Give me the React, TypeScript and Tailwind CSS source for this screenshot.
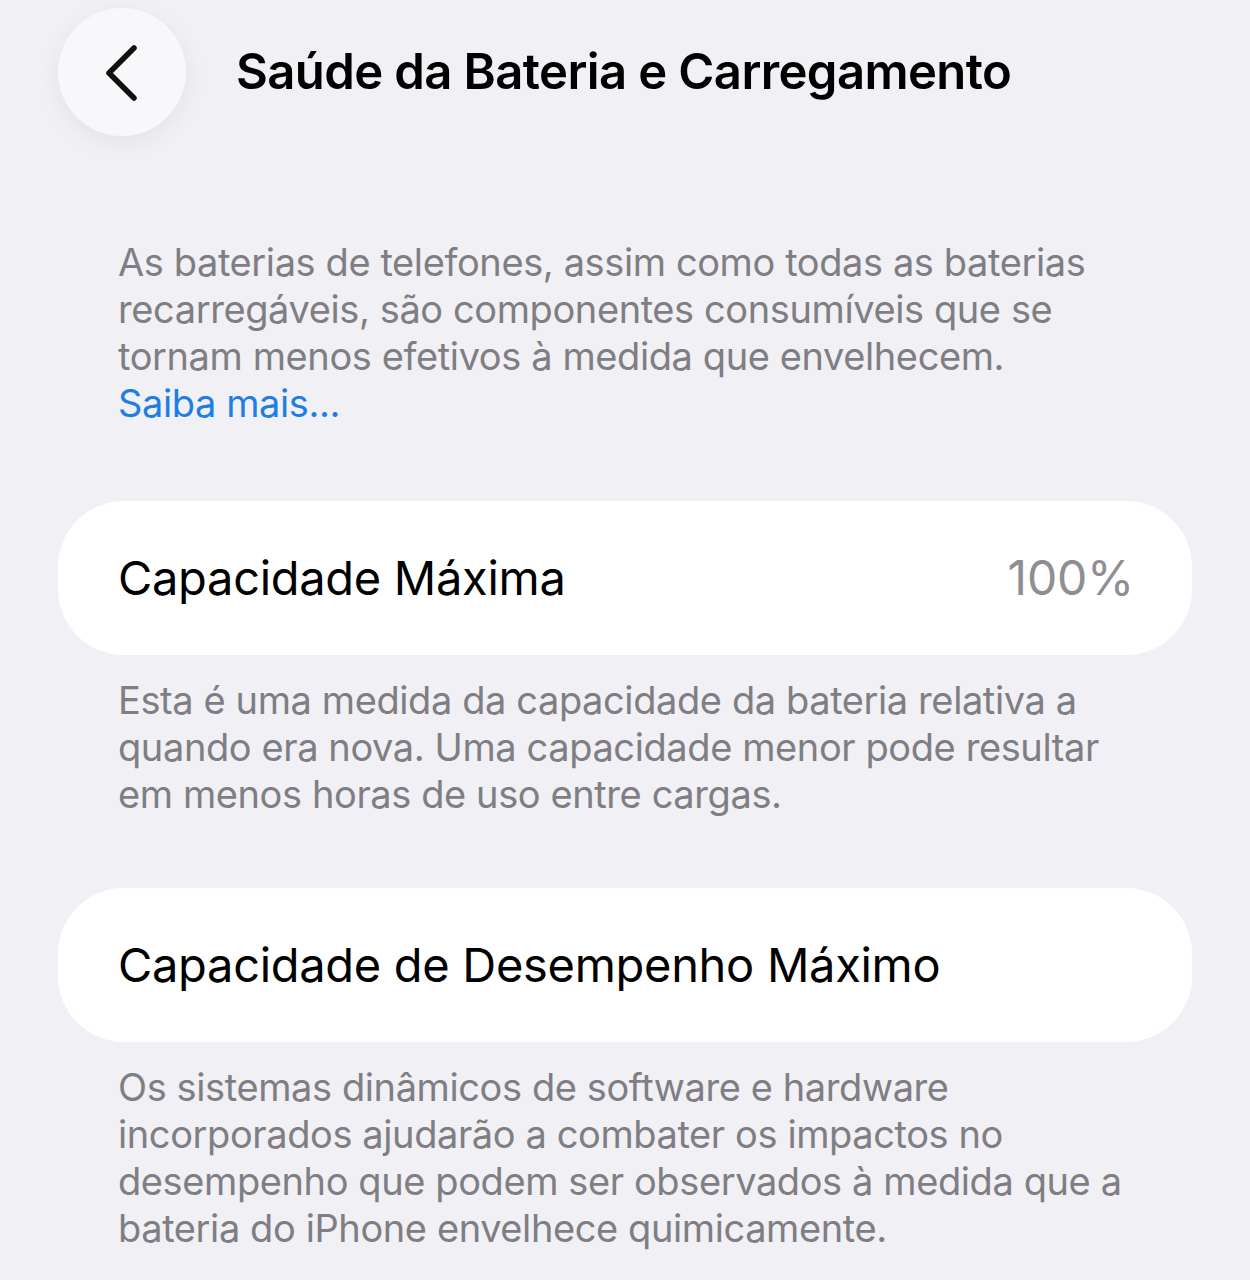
import React from "react";

const font = { fontFamily: "Inter, 'Noto Sans', sans-serif" };

function Note({ lines, link }: { lines: string[]; link?: string }) {
  return (
    <p className="whitespace-nowrap px-[118px] text-[38px] leading-[47px] text-[#7e7e83] tracking-[-0.4px]">
      {lines.map((l, i) => (
        <span key={i} className="block">
          {l}
        </span>
      ))}
      {link && <span className="block text-[#1f7ee4]">{link}</span>}
    </p>
  );
}

function Row({ label, value }: { label: string; value?: string }) {
  return (
    <div className="mx-[58px] flex h-[154px] items-center justify-between rounded-[66px] bg-white pl-[60px] pr-[58px]">
      <span className="text-[47px] text-black tracking-[-0.3px]">{label}</span>
      {value && (
        <span className="text-[48px] text-[#8e8e93] tracking-[-0.2px]">{value}</span>
      )}
    </div>
  );
}

export default function App() {
  return (
    <div
      style={font}
      className="min-h-[1280px] w-[1250px] overflow-hidden bg-[#f1f0f5] pt-2"
    >
      {/* header */}
      <div className="flex items-center pl-[58px]">
        <button className="flex h-[128px] w-[128px] shrink-0 items-center justify-center rounded-full bg-[#f8f8fa] shadow-[0_6px_24px_rgba(0,0,0,0.06)]">
          <svg width="40" height="60" viewBox="0 0 40 60" fill="none">
            <path
              d="M32 6 L7 31 L32 56"
              stroke="#111"
              strokeWidth="5.5"
              strokeLinecap="round"
              strokeLinejoin="round"
            />
          </svg>
        </button>
        <h1 className="ml-[50px] whitespace-nowrap text-[49px] font-semibold text-black tracking-[-0.6px]">
          Saúde da Bateria e Carregamento
        </h1>
      </div>

      <div className="mt-[103px]">
        <Note
          lines={[
            "As baterias de telefones, assim como todas as baterias",
            "recarregáveis, são componentes consumíveis que se",
            "tornam menos efetivos à medida que envelhecem.",
          ]}
          link="Saiba mais..."
        />
      </div>

      <div className="mt-[74px]">
        <Row label="Capacidade Máxima" value="100%" />
      </div>

      <div className="mt-[22px]">
        <Note
          lines={[
            "Esta é uma medida da capacidade da bateria relativa a",
            "quando era nova. Uma capacidade menor pode resultar",
            "em menos horas de uso entre cargas.",
          ]}
        />
      </div>

      <div className="mt-[70px]">
        <Row label="Capacidade de Desempenho Máximo" />
      </div>

      <div className="mt-[22px]">
        <Note
          lines={[
            "Os sistemas dinâmicos de software e hardware",
            "incorporados ajudarão a combater os impactos no",
            "desempenho que podem ser observados à medida que a",
            "bateria do iPhone envelhece quimicamente.",
          ]}
        />
      </div>
    </div>
  );
}
